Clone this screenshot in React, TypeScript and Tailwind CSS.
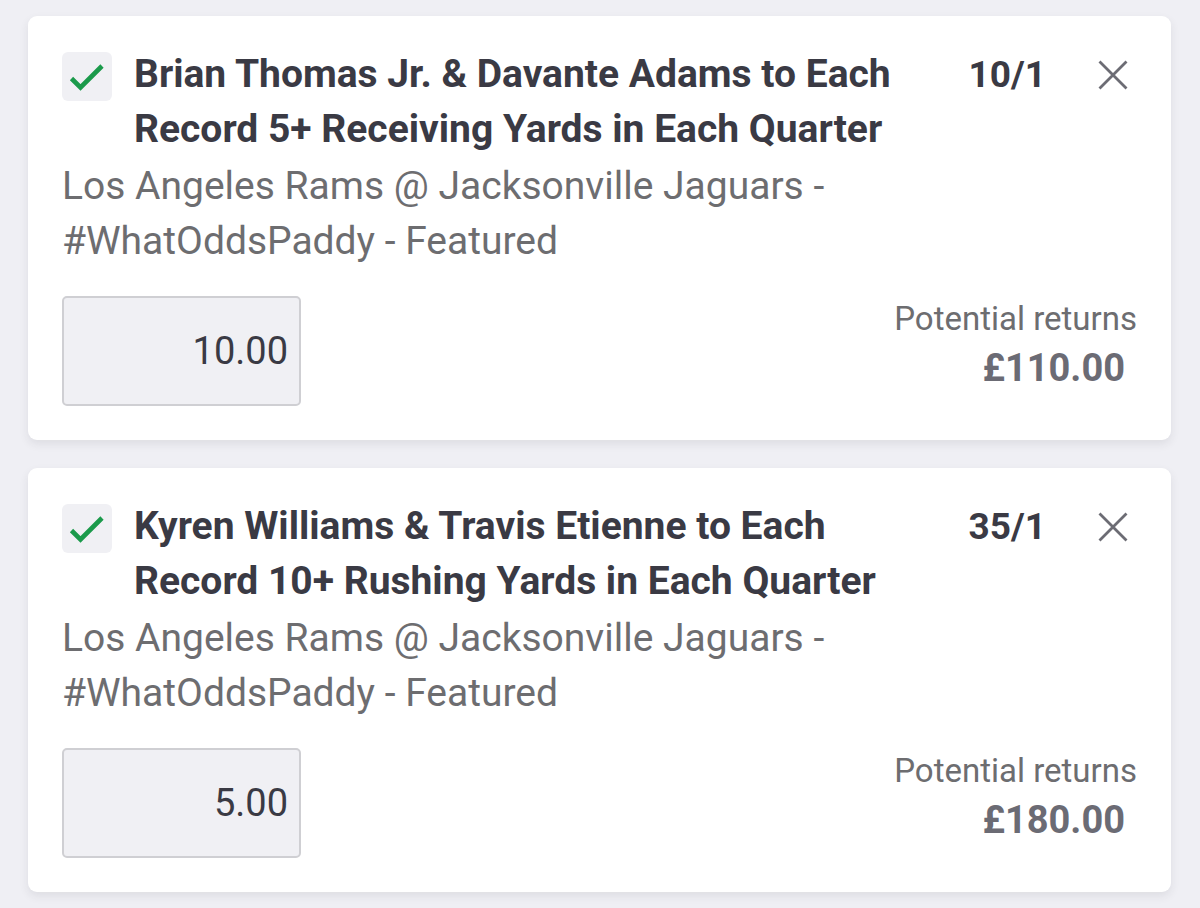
import React from "react";

type Bet = {
  title: [string, string];
  odds: string;
  stake: string;
  returns: string;
};

const bets: Bet[] = [
  {
    title: ["Brian Thomas Jr. & Davante Adams to Each", "Record 5+ Receiving Yards in Each Quarter"],
    odds: "10/1",
    stake: "10.00",
    returns: "£110.00",
  },
  {
    title: ["Kyren Williams & Travis Etienne to Each", "Record 10+ Rushing Yards in Each Quarter"],
    odds: "35/1",
    stake: "5.00",
    returns: "£180.00",
  },
];

function Check() {
  return (
    <div className="mt-[5px] flex h-[49px] w-[50px] shrink-0 items-center justify-center rounded-[6px] bg-[#f0f0f4]">
      <svg width="50" height="49" viewBox="0 0 50 49" fill="none">
        <path d="M9.5 26.5 L18.5 35.5 L40 14" stroke="#1b9a4b" strokeWidth="4.6" strokeLinecap="butt" strokeLinejoin="miter" />
      </svg>
    </div>
  );
}

function Close() {
  return (
    <div className="ml-[43px] flex h-[55px] w-[48px] shrink-0 items-center justify-center">
      <svg width="30" height="30" viewBox="0 0 30 30" fill="none">
        <path d="M1.5 1.5 L28.5 28.5 M28.5 1.5 L1.5 28.5" stroke="#6c6c74" strokeWidth="2.8" />
      </svg>
    </div>
  );
}

function Card({ bet }: { bet: Bet }) {
  return (
    <div className="rounded-[9px] bg-white px-[34px] pt-[31px] pb-[34px] shadow-[0_4px_10px_rgba(40,40,60,0.09)]">
      <div className="flex items-start">
        <Check />
        <div className="ml-[22px] min-w-0 flex-1 text-[39px] font-bold leading-[55px] text-[#3a3a44] whitespace-nowrap">
          <div>{bet.title[0]}</div>
          <div>{bet.title[1]}</div>
        </div>
        <div className="shrink-0 text-[37px] font-bold leading-[55px] text-[#3a3a44]">{bet.odds}</div>
        <Close />
      </div>
      <div className="mt-[2px] text-[39px] leading-[55px] text-[#6d6d70] whitespace-nowrap">
        <div>Los Angeles Rams @ Jacksonville Jaguars -</div>
        <div>#WhatOddsPaddy - Featured</div>
      </div>
      <div className="mt-[27px] flex items-start justify-between">
        <div className="flex h-[110px] w-[239px] items-center justify-end rounded-[5px] border-2 border-[#cfcfd3] bg-[#f0f0f4] pr-[11px] text-[38px] text-[#3a3a44]">
          {bet.stake}
        </div>
        <div className="flex flex-col items-end pt-[1px]">
          <div className="text-[33px] leading-[44px] text-[#6d6d70]">Potential returns</div>
          <div className="pr-[12px] text-[38px] font-bold leading-[54px] text-[#6b6b74]">{bet.returns}</div>
        </div>
      </div>
    </div>
  );
}

export default function App() {
  return (
    <div className="min-h-[908px] w-[1200px] bg-[#efeff4] pt-[16px] pl-[28px] pr-[29px] font-['Roboto',sans-serif]">
      <div className="flex flex-col gap-[28px]">
        {bets.map((b, i) => (
          <Card key={i} bet={b} />
        ))}
      </div>
    </div>
  );
}
